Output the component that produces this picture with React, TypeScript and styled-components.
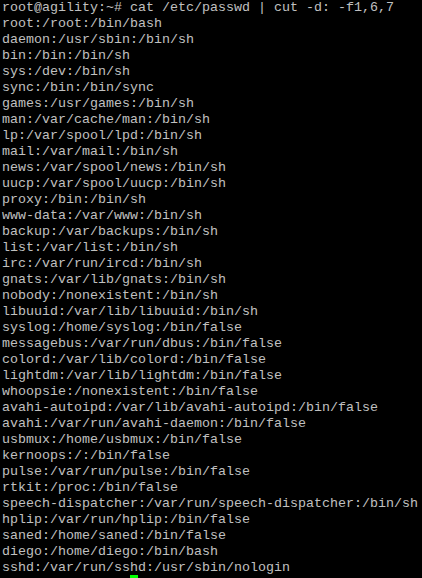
import React from "react";
import styled, { createGlobalStyle } from "styled-components";

const Global = createGlobalStyle`
  html, body { margin: 0; padding: 0; background: #000; }
  body { overflow: hidden; }
`;

const Screen = styled.div`
  width: 422px;
  height: 578px;
  background: #000;
  padding: 0 0 0 2px;
  box-sizing: border-box;
  font-family: "Liberation Mono", "Courier New", monospace;
  font-size: 13.333px;
  line-height: 16px;
  color: #c0c0c0;
  overflow: hidden;
`;

const Line = styled.div`
  white-space: pre;
  height: 16px;
`;

const Cursor = styled.div`
  width: 8px;
  height: 3px;
  margin: -1px 0 0 128px;
  background: #00ff00;
`;

const lines = [
  "root@agility:~# cat /etc/passwd | cut -d: -f1,6,7",
  "root:/root:/bin/bash",
  "daemon:/usr/sbin:/bin/sh",
  "bin:/bin:/bin/sh",
  "sys:/dev:/bin/sh",
  "sync:/bin:/bin/sync",
  "games:/usr/games:/bin/sh",
  "man:/var/cache/man:/bin/sh",
  "lp:/var/spool/lpd:/bin/sh",
  "mail:/var/mail:/bin/sh",
  "news:/var/spool/news:/bin/sh",
  "uucp:/var/spool/uucp:/bin/sh",
  "proxy:/bin:/bin/sh",
  "www-data:/var/www:/bin/sh",
  "backup:/var/backups:/bin/sh",
  "list:/var/list:/bin/sh",
  "irc:/var/run/ircd:/bin/sh",
  "gnats:/var/lib/gnats:/bin/sh",
  "nobody:/nonexistent:/bin/sh",
  "libuuid:/var/lib/libuuid:/bin/sh",
  "syslog:/home/syslog:/bin/false",
  "messagebus:/var/run/dbus:/bin/false",
  "colord:/var/lib/colord:/bin/false",
  "lightdm:/var/lib/lightdm:/bin/false",
  "whoopsie:/nonexistent:/bin/false",
  "avahi-autoipd:/var/lib/avahi-autoipd:/bin/false",
  "avahi:/var/run/avahi-daemon:/bin/false",
  "usbmux:/home/usbmux:/bin/false",
  "kernoops:/:/bin/false",
  "pulse:/var/run/pulse:/bin/false",
  "rtkit:/proc:/bin/false",
  "speech-dispatcher:/var/run/speech-dispatcher:/bin/sh",
  "hplip:/var/run/hplip:/bin/false",
  "saned:/home/saned:/bin/false",
  "diego:/home/diego:/bin/bash",
  "sshd:/var/run/sshd:/usr/sbin/nologin",
];

export default function App() {
  return (
    <>
      <Global />
      <Screen>
        {lines.map((l, i) => (
          <Line key={i}>{l}</Line>
        ))}
        <Cursor />
      </Screen>
    </>
  );
}
